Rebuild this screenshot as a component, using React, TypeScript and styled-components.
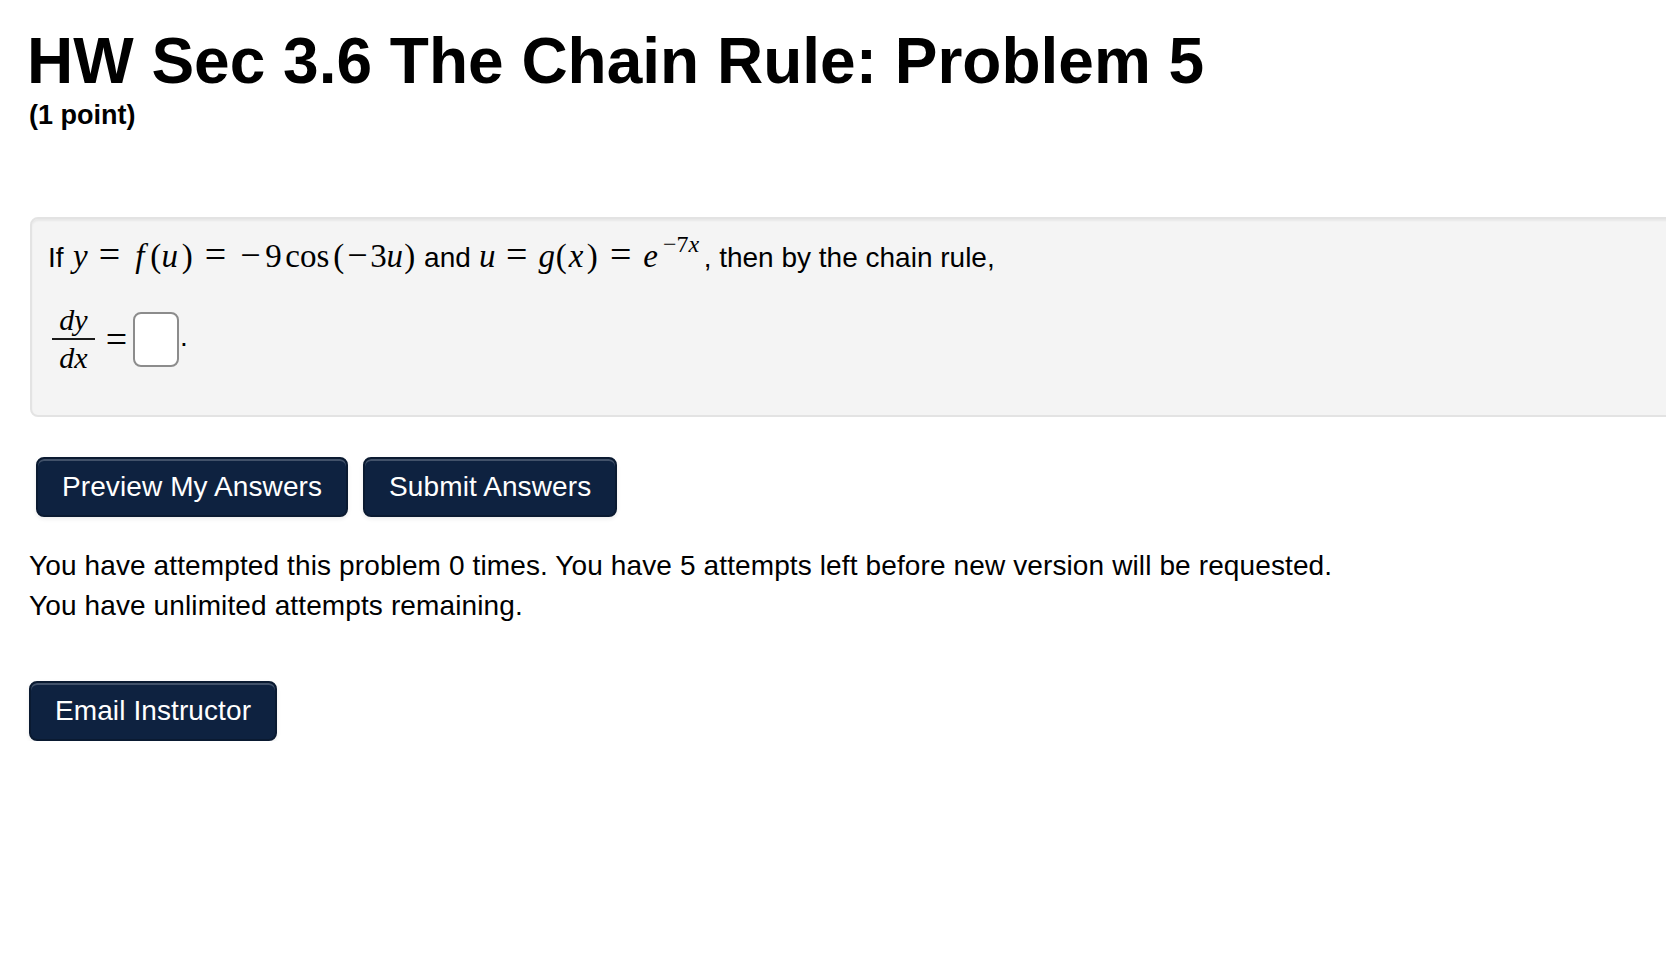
import React from "react";
import styled, { createGlobalStyle } from "styled-components";

const Global = createGlobalStyle`
  html, body { margin: 0; padding: 0; background: #fff; overflow: hidden; }
  body { font-family: "Liberation Sans", Arial, Helvetica, sans-serif; color: #000; }
`;

const Page = styled.main`
  padding: 26px 0 0 29px;
`;

const Title = styled.h1`
  margin: 0 0 0 -2px;
  font-size: 64px;
  font-weight: 700;
  line-height: 70px;
  white-space: nowrap;
`;

const Points = styled.div`
  font-size: 27px;
  font-weight: 700;
  line-height: 38px;
`;

const Well = styled.div`
  margin: 83px 0 0 1px;
  width: 1700px;
  box-sizing: border-box;
  background: #f4f4f4;
  border: 2px solid #e3e3e3;
  border-radius: 8px;
  box-shadow: inset 0 2px 2px rgba(0, 0, 0, 0.05);
  padding: 13px 16px 36px;
  font-size: 28px;
  line-height: 40px;
`;

const TextLine = styled.div`
  height: 40px;
  white-space: nowrap;
`;

const AnswerLine = styled.div`
  margin-top: 27px;
  height: 80px;
  display: flex;
  align-items: center;
`;

const Tok = styled.span<{ $w: number; $it?: boolean; $size?: number }>`
  display: inline-block;
  width: ${(p) => p.$w}px;
  text-align: center;
  font-family: "Liberation Serif", "Times New Roman", serif;
  font-style: ${(p) => (p.$it ? "italic" : "normal")};
  font-size: ${(p) => p.$size ?? 33}px;
  line-height: 40px;
  white-space: nowrap;
`;

const Sup = styled.span<{ $w: number }>`
  display: inline-block;
  width: ${(p) => p.$w}px;
  text-align: center;
  font-family: "Liberation Serif", "Times New Roman", serif;
  font-size: 24px;
  line-height: 1;
  vertical-align: 15px;
  white-space: nowrap;
`;

const It = styled.span`
  font-style: italic;
`;

const Frac = styled.span`
  display: inline-flex;
  flex-direction: column;
  align-items: center;
  width: 43px;
  margin-left: 4px;
  font-family: "Liberation Serif", "Times New Roman", serif;
  font-style: italic;
  font-size: 30px;
`;

const Num = styled.span`
  line-height: 30px;
  padding-bottom: 3px;
`;

const Bar = styled.span`
  align-self: stretch;
  height: 2px;
  background: #1a1a1a;
`;

const Den = styled.span`
  line-height: 30px;
  padding-top: 3px;
`;

const EqSign = styled(Tok)`
  margin-left: 5px;
`;

const AnswerInput = styled.input`
  width: 46px;
  height: 55px;
  box-sizing: border-box;
  margin: 0;
  padding: 0;
  border: 2px solid #8c8c8c;
  border-radius: 8px;
  background: #fff;
  outline: none;
`;

const Period = styled.span`
  margin-left: 1px;
  font-size: 28px;
  line-height: 28px;
  transform: translateY(-2px);
`;

const ButtonRow = styled.div`
  display: flex;
  gap: 15px;
  margin: 40px 0 0 7px;
`;

const Button = styled.button`
  margin: 0;
  font-family: "Liberation Sans", Arial, Helvetica, sans-serif;
  font-size: 28px;
  line-height: 40px;
  letter-spacing: 0.1px;
  color: #fff;
  background: #0e2240;
  border: 2px solid #0a1a31;
  border-radius: 8px;
  padding: 8px 24px;
  box-shadow: inset 0 2px 0 rgba(255, 255, 255, 0.22), 0 2px 4px rgba(0, 0, 0, 0.08);
  cursor: pointer;
  white-space: nowrap;
`;

const Attempts = styled.p`
  margin: 29px 0 0;
  font-size: 28px;
  line-height: 40px;
  letter-spacing: 0.12px;
`;

const EmailRow = styled.div`
  margin-top: 55px;
  display: flex;
`;

export default function App() {
  return (
    <>
      <Global />
      <Page>
        <Title>HW Sec 3.6 The Chain Rule: Problem 5</Title>
        <Points>(1 point)</Points>
        <Well>
          <TextLine>
            {"If "}
            <Tok $w={18} $it>y</Tok>
            <Tok $w={40} $size={38}>=</Tok>
            <Tok $w={21} $it>f</Tok>
            <Tok $w={10}>(</Tok>
            <Tok $w={19} $it>u</Tok>
            <Tok $w={16}>)</Tok>
            <Tok $w={40} $size={38}>=</Tok>
            <Tok $w={30} $size={36}>−</Tok>
            <Tok $w={16}>9</Tok>
            <Tok $w={52}>cos</Tok>
            <Tok $w={11}>(</Tok>
            <Tok $w={26} $size={36}>−</Tok>
            <Tok $w={16}>3</Tok>
            <Tok $w={17} $it>u</Tok>
            <Tok $w={13}>)</Tok>
            {" and "}
            <Tok $w={17} $it>u</Tok>
            <Tok $w={42} $size={38}>=</Tok>
            <Tok $w={18} $it>g</Tok>
            <Tok $w={11}>(</Tok>
            <Tok $w={19} $it>x</Tok>
            <Tok $w={13}>)</Tok>
            <Tok $w={44} $size={38}>=</Tok>
            <Tok $w={16} $it>e</Tok>
            <Sup $w={45}>
              −7<It>x</It>
            </Sup>
            {", then by the chain rule,"}
          </TextLine>
          <AnswerLine>
            <Frac>
              <Num>dy</Num>
              <Bar />
              <Den>dx</Den>
            </Frac>
            <EqSign $w={33} $size={38}>=</EqSign>
            <AnswerInput type="text" aria-label="answer" />
            <Period>.</Period>
          </AnswerLine>
        </Well>
        <ButtonRow>
          <Button>Preview My Answers</Button>
          <Button>Submit Answers</Button>
        </ButtonRow>
        <Attempts>
          You have attempted this problem 0 times. You have 5 attempts left before new version will be requested.
          <br />
          You have unlimited attempts remaining.
        </Attempts>
        <EmailRow>
          <Button>Email Instructor</Button>
        </EmailRow>
      </Page>
    </>
  );
}
